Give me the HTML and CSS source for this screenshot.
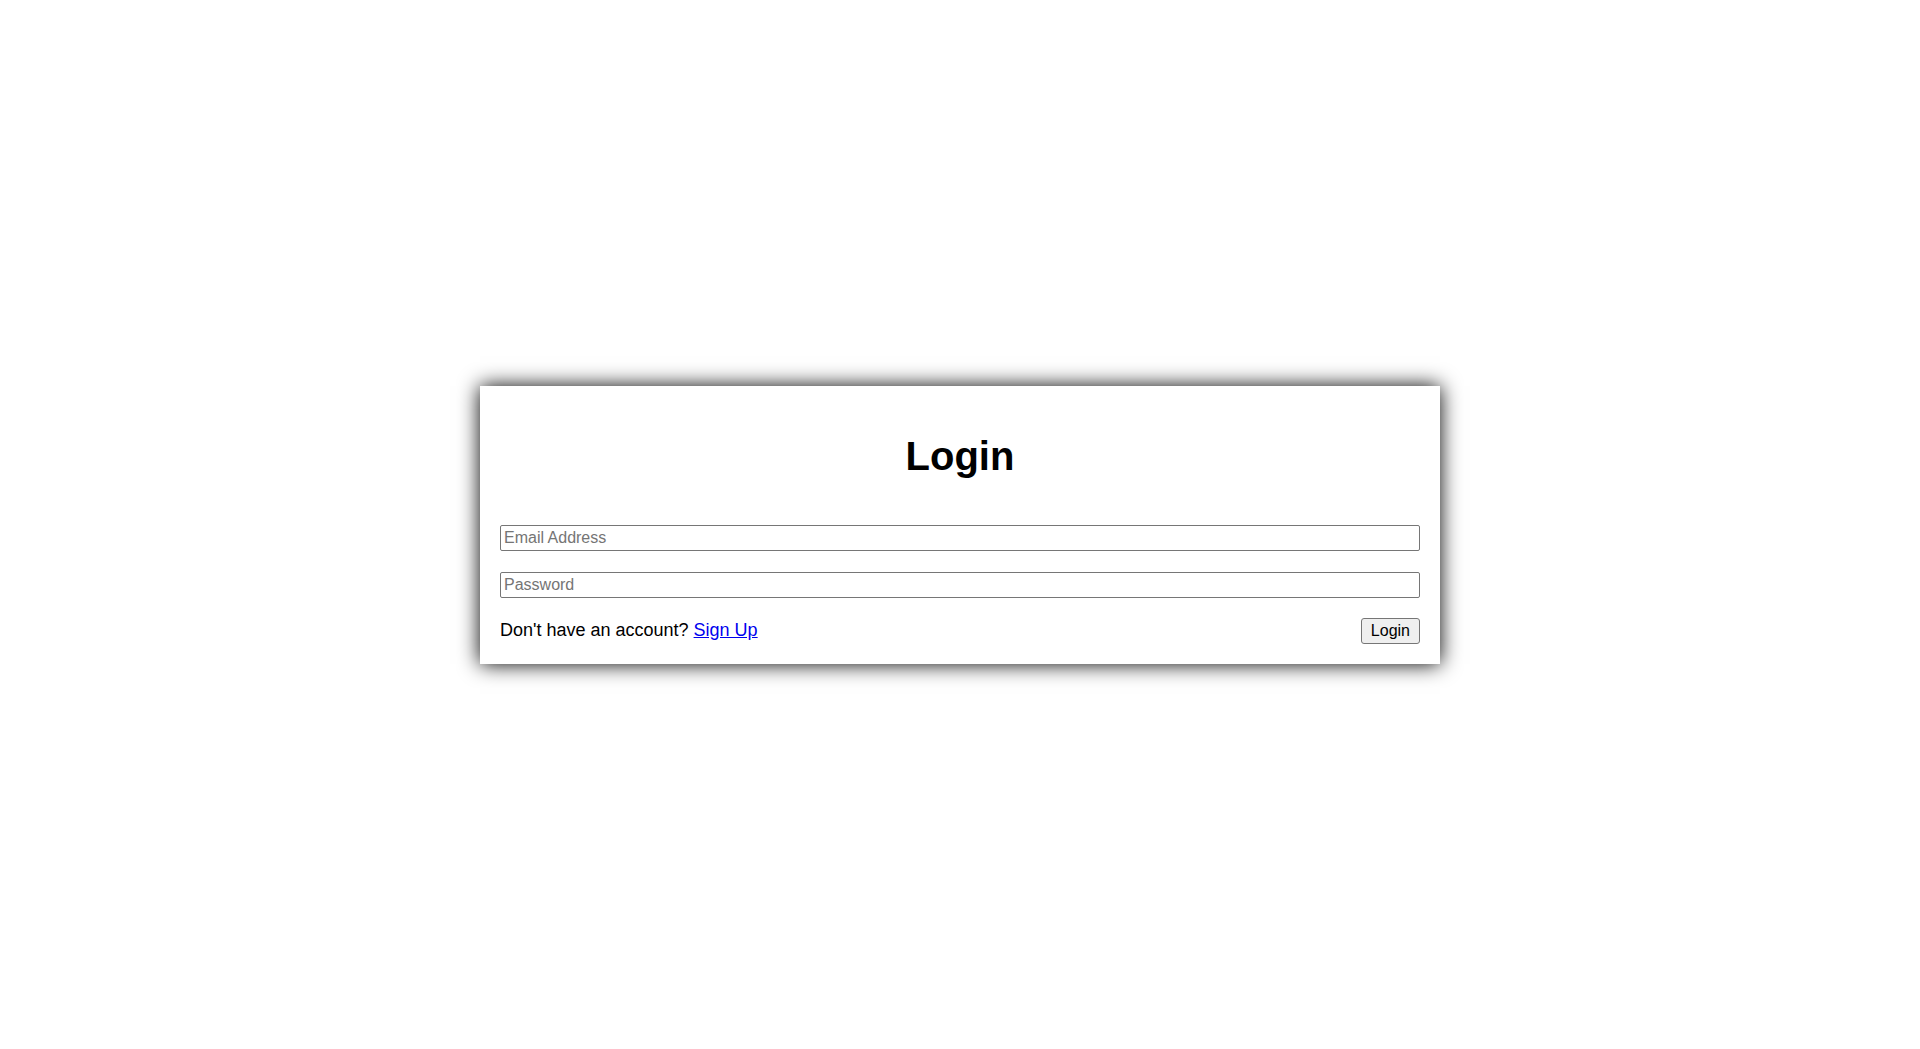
FILE: index.html
```html
<!DOCTYPE html>
<html lang="en">
<head>
<meta charset="utf-8">
<title>Login</title>
<link rel="stylesheet" href="styles.css">
</head>
<body>
<main class="page">
  <section class="card">
    <h1 class="title">Login</h1>
    <form class="form" onsubmit="return false">
      <input class="field field-first" type="email" placeholder="Email Address">
      <input class="field" type="password" placeholder="Password">
      <div class="row">
        <span class="signup">Don't have an account? <a href="#" class="link">Sign Up</a></span>
        <button class="btn" type="submit">Login</button>
      </div>
    </form>
  </section>
</main>
</body>
</html>
```
FILE: styles.css
```css
html, body {
  margin: 0;
  padding: 0;
  background: #ffffff;
}
body {
  font-family: "Liberation Sans", Arial, sans-serif;
  color: #000000;
}
.page {
  height: 100vh;
  display: flex;
  align-items: center;
  justify-content: center;
}
.card {
  width: 960px;
  box-sizing: border-box;
  padding: 20px;
  background: #ffffff;
  box-shadow: 0 0 20px #000000;
}
.title {
  margin: 27px 0 46px;
  font-size: 40px;
  line-height: 46px;
  font-weight: bold;
  text-align: center;
}
.form {
  display: flex;
  flex-direction: column;
  gap: 20px;
}
.field {
  display: block;
  width: 100%;
  box-sizing: border-box;
  height: 26px;
  margin: 0;
  padding: 3px 3px;
  font-family: "Liberation Sans", Arial, sans-serif;
  font-size: 16px;
  line-height: 18px;
  border: 1px solid #767676;
  border-radius: 2px;
  background: #ffffff;
  color: #000000;
}
.field-first {
  margin-bottom: 1px;
}
.field::placeholder {
  color: #757575;
}
.row {
  display: flex;
  align-items: center;
  justify-content: space-between;
  height: 26px;
}
.signup {
  font-size: 18px;
  line-height: 21px;
}
.link {
  color: #0000ee;
  text-decoration: underline;
}
.btn {
  box-sizing: border-box;
  height: 26px;
  margin: 0;
  padding: 3px 9px;
  font-family: "Liberation Sans", Arial, sans-serif;
  font-size: 16px;
  line-height: 18px;
  color: #000000;
  background: #efefef;
  border: 1px solid #767676;
  border-radius: 3px;
}
```
